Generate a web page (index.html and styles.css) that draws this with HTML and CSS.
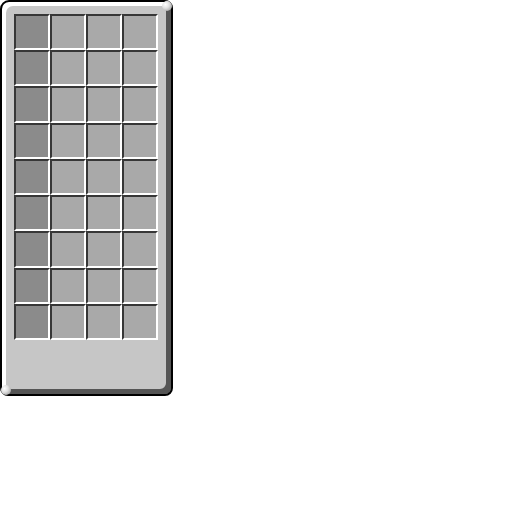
FILE: index.html
```html
<!DOCTYPE html>
<html>
<head>
<meta charset="utf-8">
<link rel="stylesheet" href="styles.css">
</head>
<body>
<div class="panel">
  <div class="grid">
    <div class="slot dark"></div><div class="slot"></div><div class="slot"></div><div class="slot"></div>
    <div class="slot dark"></div><div class="slot"></div><div class="slot"></div><div class="slot"></div>
    <div class="slot dark"></div><div class="slot"></div><div class="slot"></div><div class="slot"></div>
    <div class="slot dark"></div><div class="slot"></div><div class="slot"></div><div class="slot"></div>
    <div class="slot dark"></div><div class="slot"></div><div class="slot"></div><div class="slot"></div>
    <div class="slot dark"></div><div class="slot"></div><div class="slot"></div><div class="slot"></div>
    <div class="slot dark"></div><div class="slot"></div><div class="slot"></div><div class="slot"></div>
    <div class="slot dark"></div><div class="slot"></div><div class="slot"></div><div class="slot"></div>
    <div class="slot dark"></div><div class="slot"></div><div class="slot"></div><div class="slot"></div>
  </div>
  <span class="blob blob-tr"></span>
  <span class="blob blob-bl"></span>
</div>
</body>
</html>
```
FILE: styles.css
```css
html, body {
  margin: 0;
  padding: 0;
  background: #fff;
}
.panel {
  position: relative;
  box-sizing: border-box;
  width: 173px;
  height: 396px;
  border: 2px solid #000;
  border-radius: 9px 8px 8px 8px;
  background: #c6c6c6;
  box-shadow: inset 4px 4px 0 #fff, inset -5px -5px 0 #555;
  padding: 12px 13px 53px 12px;
}
.grid {
  display: grid;
  grid-template-columns: repeat(4, 36px);
  grid-template-rows: repeat(9, 36.22px);
}
.slot {
  box-sizing: border-box;
  border-top: 2px solid #373737;
  border-left: 2px solid #373737;
  border-bottom: 2px solid #fff;
  border-right: 2px solid #fff;
  background: #a9a9a9;
}
.slot.dark {
  background: #8b8b8b;
}
.blob {
  position: absolute;
  width: 10px;
  height: 10px;
  border-radius: 50%;
  background: radial-gradient(circle at 35% 35%, #fff 0%, #e0e0e0 40%, #8a8a8a 100%);
}
.blob-tr {
  top: -1px;
  right: -1px;
}
.blob-bl {
  bottom: -1px;
  left: -1px;
}
```
